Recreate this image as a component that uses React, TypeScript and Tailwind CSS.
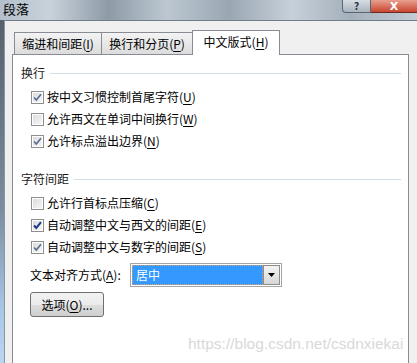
import React from "react";

const F = { fontFamily: '"Noto Sans CJK SC", "Microsoft YaHei", sans-serif' };

const U = ({ c }: { c: string }) => (
  <span className="underline decoration-1 underline-offset-[2px]">{c}</span>
);

const Check = ({ checked, dark }: { checked?: boolean; dark?: boolean }) => (
  <div className="w-[13px] h-[13px] border border-[#8f8f8f] bg-white p-[1px] shrink-0">
    <div className="w-full h-full bg-[linear-gradient(135deg,#dcdcdc,#f6f6f6)] flex items-center justify-center">
      {checked && (
        <svg width="9" height="9" viewBox="0 0 9 9">
          <path
            d="M1 4.5 L3.3 7 L8 1.2"
            fill="none"
            stroke={dark ? "#1e3a8a" : "#5a6a92"}
            strokeWidth={dark ? 2 : 1.6}
          />
        </svg>
      )}
    </div>
  </div>
);

const Row = ({
  checked,
  dark,
  children,
}: {
  checked?: boolean;
  dark?: boolean;
  children: React.ReactNode;
}) => (
  <div className="h-[22px] flex items-center pl-[10px] gap-[3px]">
    <Check checked={checked} dark={dark} />
    <span className="text-[12px] leading-none text-black whitespace-nowrap">{children}</span>
  </div>
);

const Header = ({ children, mt }: { children: React.ReactNode; mt: string }) => (
  <div className={`h-[16px] flex items-center ${mt}`}>
    <span className="text-[12px] leading-none text-[#1a1a1a] whitespace-nowrap">{children}</span>
    <div className="flex-1 h-px bg-[#d3dde4] ml-[5px]" />
  </div>
);

export default function App() {
  return (
    <div className="w-[417px] h-[363px] overflow-hidden flex flex-col bg-[#f0f0f0] relative" style={F}>
      {/* title bar */}
      <div className="h-[20px] flex shrink-0 bg-[linear-gradient(90deg,#b3bfca_0%,#c9d2da_12%,#8e9ba7_26%,#bcc7d1_40%,#9aa7b3_55%,#c7d0d9_70%,#a4b0bc_84%,#c2ccd5_100%)]">
        <div className="flex-1 pl-[3px] pt-[1px] text-[13px] leading-[16px] text-black">段落</div>
        <div className="flex items-start">
          <div className="w-[29px] h-[13px] rounded-bl-[4px] border border-t-0 border-[#5b6670] bg-[linear-gradient(#d7dde3,#a9b3bd)] flex items-center justify-center text-[10px] leading-none text-[#27313b] font-bold">
            ?
          </div>
          <div className="w-[46px] h-[13px] border-b border-[#6b2a22] bg-[linear-gradient(#e8a090,#c9452f)] flex items-center justify-center text-[11px] leading-none text-white font-bold" style={{ fontFamily: '"DejaVu Sans", sans-serif' }}>
            X
          </div>
        </div>
      </div>
      {/* body */}
      <div className="flex-1 flex">
        <div className="w-[5px] bg-[linear-gradient(#56616c,#7a8c9e_55%,#a9c8e8_85%,#b9d5f0)] border-r border-[#8a96a1]" />
        <div className="flex-1 bg-[#f0f0f0] border-t border-[#6f7c88] pl-[7px] pt-[9px] flex flex-col">
          {/* tabs */}
          <div className="h-[24px] flex items-end pl-[2px] relative z-10">
            <div className="w-[88px] h-[22px] border border-b-0 border-[#898c95] bg-[linear-gradient(#f3f3f3,#dcdcdc)] flex items-center justify-center text-[12px] leading-none text-black">
              缩进和间距(<U c="I" />)
            </div>
            <div className="w-[92px] h-[22px] -ml-px border border-b-0 border-[#898c95] bg-[linear-gradient(#f3f3f3,#dcdcdc)] flex items-center justify-center text-[12px] leading-none text-black">
              换行和分页(<U c="P" />)
            </div>
            <div className="w-[88px] h-[25px] -ml-px -mb-px border border-b-0 border-[#898c95] bg-white flex items-center justify-center text-[12px] leading-none text-black pb-[2px]">
              中文版式(<U c="H" />)
            </div>
          </div>
          {/* panel */}
          <div className="flex-1 w-[397px] border border-b-0 border-[#898c95] bg-white pt-[10px] pl-[8px] pr-[7px] flex flex-col">
            <Header mt="">换行</Header>
            <div className="mt-[5px]">
              <Row checked>
                按中文习惯控制首尾字符(<U c="U" />)
              </Row>
              <Row>
                允许西文在单词中间换行(<U c="W" />)
              </Row>
              <Row checked>
                允许标点溢出边界(<U c="N" />)
              </Row>
            </div>
            <Header mt="mt-[19px]">字符间距</Header>
            <div className="mt-[5px]">
              <Row>
                允许行首标点压缩(<U c="C" />)
              </Row>
              <Row checked dark>
                自动调整中文与西文的间距(<U c="E" />)
              </Row>
              <Row checked>
                自动调整中文与数字的间距(<U c="S" />)
              </Row>
            </div>
            <div className="mt-[5px] h-[24px] flex items-center pl-[9px]">
              <span className="w-[100px] text-[12px] leading-none text-black whitespace-nowrap">
                文本对齐方式(<U c="A" />):
              </span>
              <div className="w-[152px] h-[24px] border border-[#a5a5a5] bg-white p-[1px] flex">
                <div className="flex-1 bg-[#3399ff] border border-dotted border-[#e0a060] flex items-center pl-[3px] text-[12px] leading-none text-white">
                  居中
                </div>
                <div className="w-[17px] border border-[#8c8c8c] bg-[linear-gradient(#f4f4f4,#d6d6d6)] flex items-center justify-center">
                  <svg width="7" height="4" viewBox="0 0 7 4">
                    <path d="M0 0 H7 L3.5 4 Z" fill="#000" />
                  </svg>
                </div>
              </div>
            </div>
            <div className="mt-[5px] pl-[9px]">
              <div className="w-[74px] h-[25px] rounded-[3px] border border-[#707070] bg-[linear-gradient(#f2f2f2_0%,#ebebeb_50%,#dddddd_51%,#cfcfcf_100%)] flex items-center justify-center text-[12px] leading-none text-black">
                选项(<U c="O" />)...
              </div>
            </div>
          </div>
        </div>
      </div>
      {/* watermark */}
      <div
        className="absolute left-[188px] top-[334px] text-[15.5px] leading-[20px] text-[#d9d9d9] whitespace-nowrap"
        style={{ fontFamily: '"Liberation Sans", Arial, sans-serif' }}
      >
        https://blog.csdn.net/csdnxiekai
      </div>
    </div>
  );
}
